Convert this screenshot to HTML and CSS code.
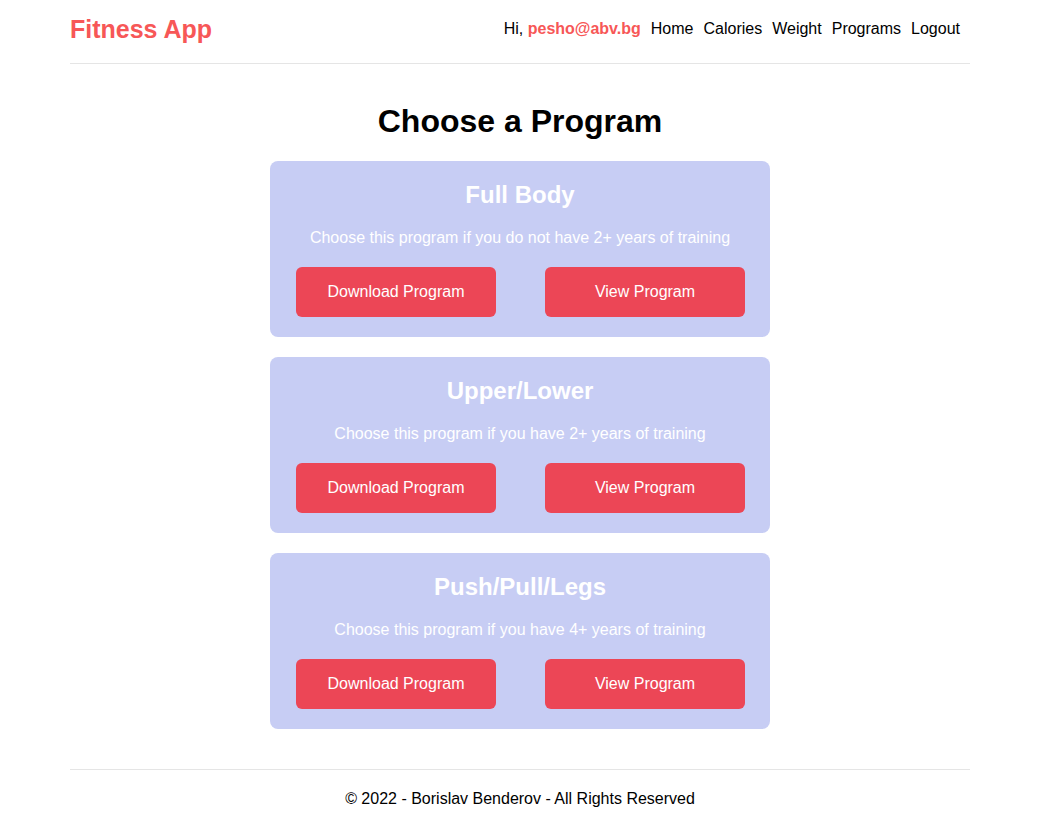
FILE: index.html
```html
<!DOCTYPE html>
<html lang="en">
<head>
    <meta charset="UTF-8">
    <meta name="viewport" content="width=device-width,initial-scale=1.0">
    <title>Fitness App</title>
    <link rel="stylesheet" href="styles.css">
</head>
<body>
    <div class="container">
        <header>
            <a href="#" class="logo">Fitness App</a>
            <nav>
                <span class="greeting">Hi, <strong>pesho@abv.bg</strong></span>
                <a href="#">Home</a>
                <a href="#">Calories</a>
                <a href="#">Weight</a>
                <a href="#">Programs</a>
                <a href="#">Logout</a>
            </nav>
        </header>
        <main>
            <h1>Choose a Program</h1>
            <section class="program">
                <h2>Full Body</h2>
                <p>Choose this program if you do not have 2+ years of training</p>
                <div class="actions">
                    <a href="#" class="btn">Download Program</a>
                    <a href="#" class="btn">View Program</a>
                </div>
            </section>
            <section class="program">
                <h2>Upper/Lower</h2>
                <p>Choose this program if you have 2+ years of training</p>
                <div class="actions">
                    <a href="#" class="btn">Download Program</a>
                    <a href="#" class="btn">View Program</a>
                </div>
            </section>
            <section class="program">
                <h2>Push/Pull/Legs</h2>
                <p>Choose this program if you have 4+ years of training</p>
                <div class="actions">
                    <a href="#" class="btn">Download Program</a>
                    <a href="#" class="btn">View Program</a>
                </div>
            </section>
        </main>
        <footer>
            <p>&copy; 2022 - Borislav Benderov - All Rights Reserved</p>
        </footer>
    </div>
</body>
</html>
```
FILE: styles.css
```css
*{
    margin: 0;
    padding: 0;
    box-sizing: border-box;
}
body{
    font-family: 'Liberation Sans', Arial, sans-serif;
    font-size: 16px;
    line-height: 18px;
    color: #000;
    background: #fff;
    padding-left: 3px;
}
a{
    text-decoration: none;
    color: #000;
}
.container{
    width: 900px;
    margin: 0 auto;
}
header{
    height: 64px;
    padding: 1px 0 7px;
    display: flex;
    justify-content: space-between;
    align-items: center;
    border-bottom: 1px solid #e5e5e5;
}
.logo{
    font-size: 25px;
    line-height: 30px;
    font-weight: bold;
    color: #f75757;
}
nav{
    display: flex;
    gap: 10px;
    padding-right: 10px;
}
.greeting strong{
    color: #f75757;
}
main{
    display: flex;
    flex-direction: column;
    align-items: center;
    gap: 20px;
    padding: 39px 0 40px;
}
h1{
    font-size: 32px;
    line-height: 37px;
    margin-bottom: 1px;
}
.program{
    width: 500px;
    padding: 20px 25px;
    background-color: #c7cdf4;
    border-radius: 8px;
    text-align: center;
    color: #fff;
}
.program h2{
    font-size: 24px;
    line-height: 28px;
    margin-bottom: 20px;
}
.program p{
    margin-bottom: 20px;
}
.actions{
    display: flex;
    justify-content: space-between;
    padding-left: 1px;
}
.btn{
    width: 200px;
    height: 50px;
    display: flex;
    justify-content: center;
    align-items: center;
    background-color: #ec4656;
    color: #fff;
    border-radius: 6px;
}
footer{
    border-top: 1px solid #e5e5e5;
    padding-top: 20px;
    text-align: center;
}
```
